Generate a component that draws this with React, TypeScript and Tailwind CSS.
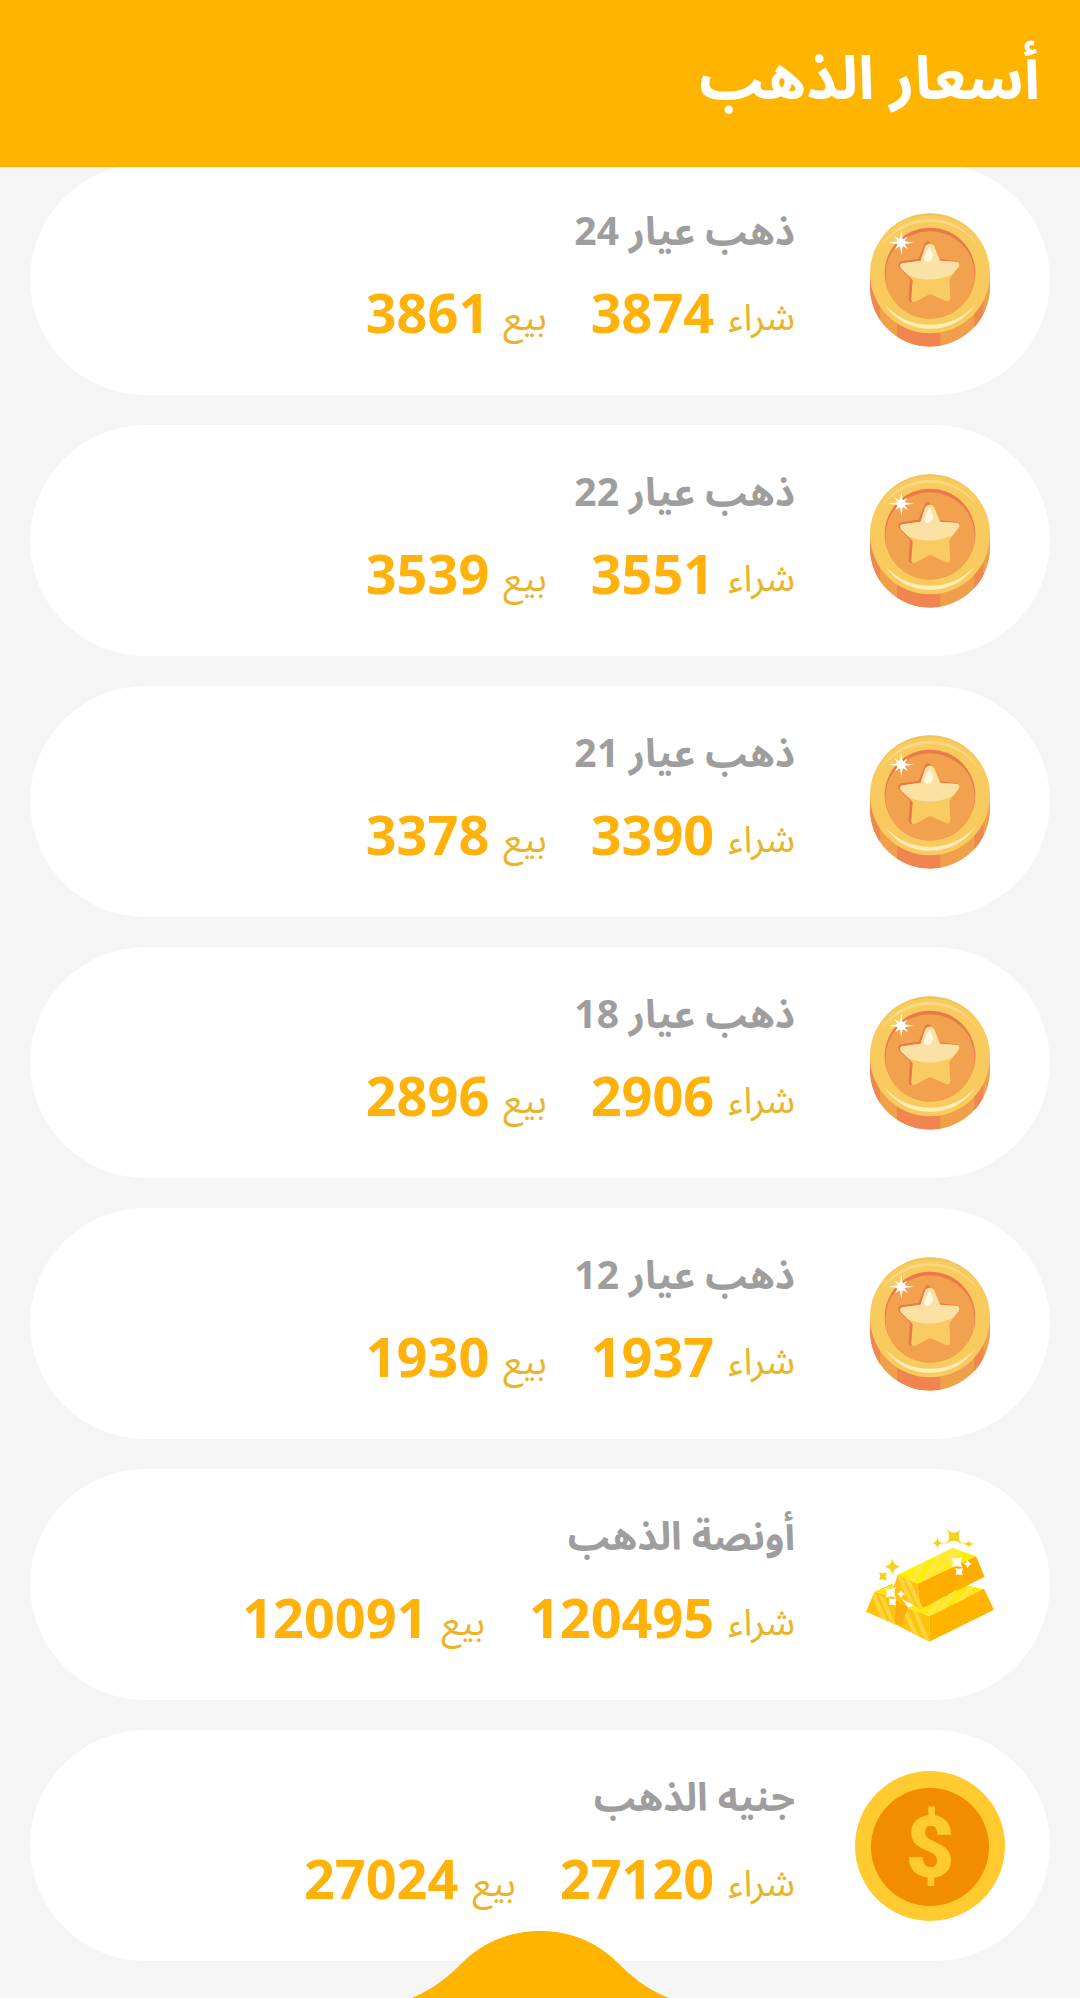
type IconName = 'coin' | 'bars' | 'pound';

interface GoldPrice {
  name: string;
  buy: number;
  sell: number;
  icon: IconName;
}

const prices: GoldPrice[] = [
  { name: 'ذهب عيار 24', buy: 3874, sell: 3861, icon: 'coin' },
  { name: 'ذهب عيار 22', buy: 3551, sell: 3539, icon: 'coin' },
  { name: 'ذهب عيار 21', buy: 3390, sell: 3378, icon: 'coin' },
  { name: 'ذهب عيار 18', buy: 2906, sell: 2896, icon: 'coin' },
  { name: 'ذهب عيار 12', buy: 1937, sell: 1930, icon: 'coin' },
  { name: 'أونصة الذهب', buy: 120495, sell: 120091, icon: 'bars' },
  { name: 'جنيه الذهب', buy: 27120, sell: 27024, icon: 'pound' },
];

function CoinIcon() {
  return (
    <svg viewBox="45 45 450 450" className="size-full" aria-hidden="true">
      <defs>
        <clipPath id="coin-side">
          <path d="M90 250 V290 A180 180 0 0 0 450 290 V250 Z" />
        </clipPath>
      </defs>
      {/* Edge */}
      <g clipPath="url(#coin-side)">
        <rect x="90" y="240" width="360" height="240" fill="#f0a04b" />
        <rect x="90" y="240" width="30" height="240" fill="#ee8850" />
        <rect x="171" y="240" width="130" height="240" fill="#f08550" />
        <rect x="403" y="240" width="27" height="240" fill="#ee8850" />
      </g>
      {/* Face */}
      <circle cx="270" cy="250" r="180" fill="#f9cb5e" />
      <path d="M128 140 A180 180 0 0 1 412 140 A190 190 0 0 0 128 140" fill="#efc45c" />
      <path d="M122 168 Q176 88 270 86 Q364 88 420 174 Q360 96 270 95 Q186 96 122 168" fill="#fbd983" />
      <circle cx="270" cy="249" r="136" fill="#ea7a4c" />
      <ellipse cx="270" cy="255" rx="134" ry="131" fill="#f2a14e" />
      <path d="M134 344 Q190 404 270 404 Q350 404 406 344 Q356 416 270 416 Q184 416 134 344" fill="#fdeeb8" />
      {/* Star */}
      <path d="M255 158 Q264 148 271 158 L290 206 L350 214 Q358 220 350 230 L322 264 L326 326 L265 310 L214 336 Q204 334 206 322 L210 266 L176 230 Q172 218 184 214 L236 206 Z" fill="#e87949" />
      <path d="M256 168 Q270 154 282 168 L300 212 L352 216 Q362 222 355 232 L328 268 L331 325 Q330 336 320 334 L270 312 L224 336 Q213 338 214 326 L218 270 L183 235 Q176 222 188 220 L242 212 Z" fill="#facb62" />
      <path d="M256 168 Q270 154 282 168 L300 212 L352 216 Q362 222 355 232 L338 252 Q270 284 204 255 L183 235 Q176 222 188 220 L242 212 Z" fill="#fbe2a4" />
      <path d="M269 168 L280 196 Q276 216 263 216 Q250 214 252 201 Z" fill="#fff6dc" />
      {/* Sparkle */}
      <path d="M184 120 L188 149 L203 139 L193 154 L222 158 L193 162 L205 178 L188 168 L184 196 L180 168 L165 178 L174 162 L145 158 L174 154 L163 139 L180 149 Z" fill="#fff" />
      <circle cx="183" cy="158" r="13" fill="#fff" />
    </svg>
  );
}

function BarsIcon() {
  return (
    <svg viewBox="45 28 450 450" className="size-full" aria-hidden="true">
      <defs>
        <clipPath id="bar-tops">
          <path d="M173 222 L338 142 L408 167 L232 249 Z M203 324 L240 328 L375 253 L432 266 L268 347 Z" />
        </clipPath>
        <clipPath id="bar-fronts">
          <path d="M103 274 L78 333 L168 374 L190 325 Z M173 222 L155 278 L242 325 L262 318 L232 249 Z M203 322 L182 376 L268 423 L268 347 Z" />
        </clipPath>
      </defs>
      {/* Left bar */}
      <path d="M103 274 L155 250 L205 322 L182 378 L78 333 Z" fill="#ffc20a" />
      <path d="M103 274 L155 252 L168 268 L155 290 Z" fill="#ffe60a" />
      {/* Right bar */}
      <path d="M203 322 L375 253 L432 266 L268 347 Z" fill="#ffe90a" />
      <path d="M203 322 L268 347 V423 L180 378 Z" fill="#ffc40d" />
      <path d="M268 347 L432 264 L462 327 L268 423 Z" fill="#ffb500" />
      {/* Top bar */}
      <path d="M173 222 L338 142 L408 167 L232 249 Z" fill="#fff000" />
      <path d="M408 167 L434 228 L242 325 L232 249 Z" fill="#ffae00" />
      <path d="M173 222 L232 249 L242 325 L155 278 Z" fill="#ffc210" />
      <path d="M168 300 L205 320 L184 374 L164 368 Z" fill="#ffad08" />
      <g clipPath="url(#bar-tops)" stroke="#ffe845" strokeWidth="14">
        <path d="M200 260 L262 170 M238 260 L320 140 M262 260 L344 140 M325 190 L365 145 M262 350 L320 270 M288 350 L346 262 M355 310 L400 245" />
      </g>
      <g clipPath="url(#bar-fronts)" stroke="#ffd640" strokeWidth="12">
        <path d="M98 275 L140 372 M118 275 L164 378 M178 226 L225 330 M196 225 L246 330 M192 324 L236 420 M220 320 L266 430" />
      </g>
      {/* Sparkles */}
      <g fill="#f7d21c">
        <path d="M320 86 Q342 106 361 87 Q350 106 363 128 Q342 112 321 128 Q334 106 320 86" />
        <path d="M292 108 Q293 126 310 128 Q293 129 292 146 Q291 129 276 128 Q291 126 292 108" />
        <path d="M386 119 Q387 129 403 130 Q387 132 386 142 Q385 132 368 130 Q385 129 386 119" />
        <path d="M157 173 Q160 195 181 198 Q160 201 157 223 Q154 201 134 198 Q154 195 157 173" />
        <path d="M117 214 Q130 222 142 214 Q134 227 141 240 Q129 233 117 239 Q124 227 117 214" />
        <path d="M305 127 H326 M358 127 H373" stroke="#f7d21c" strokeWidth="2" />
      </g>
      <g fill="#fff">
        <path d="M333 170 Q349 178 367 168 Q358 184 367 200 Q350 193 334 200 Q344 184 333 170" />
        <path d="M383 176 Q385 188 397 189 Q385 191 383 203 Q381 191 369 189 Q381 187 383 176" />
        <path d="M346 202 Q358 207 369 201 Q364 213 368 224 Q357 219 347 223 Q351 213 346 202" />
        <path d="M135 261 Q151 270 168 259 Q159 275 168 291 Q152 284 136 291 Q145 276 135 261" />
        <path d="M183 267 Q185 279 197 280 Q185 282 183 294 Q181 282 169 280 Q181 278 183 267" />
        <path d="M146 293 Q158 298 169 292 Q164 304 168 315 Q157 310 147 314 Q151 304 146 293" />
      </g>
    </svg>
  );
}

function PoundIcon() {
  return (
    <svg viewBox="45 62 450 450" className="size-full" aria-hidden="true">
      <circle cx="270" cy="287" r="225" fill="#ffcb30" />
      <circle cx="270" cy="290" r="177" fill="#f28c00" />
      <text x="270" y="381" textAnchor="middle" fontSize="254" fontWeight="900" fill="#ffcb30" className="font-['Roboto',sans-serif]">
        $
      </text>
    </svg>
  );
}

const icons = { coin: CoinIcon, bars: BarsIcon, pound: PoundIcon };

function Price({ label, value }: { label: string; value: number }) {
  return (
    <div className="flex items-center gap-[14px]">
      <dt className="pt-2 text-[37px] leading-none text-[#e9b42c]">{label}</dt>
      <dd className="text-[54px]/[84px] font-bold text-[#ffb20a]">{value}</dd>
    </div>
  );
}

function PriceCard({ item }: { item: GoldPrice }) {
  const Icon = icons[item.icon];

  return (
    <li className="flex h-[231px] items-center gap-[60px] rounded-full bg-white px-[45px]">
      <div className="size-[150px] shrink-0">
        <Icon />
      </div>
      <div className="pb-4">
        <h2 className="text-[39px]/[80px] font-bold text-[#9e9e9e]">{item.name}</h2>
        <dl className="flex gap-11">
          <Price label="شراء" value={item.buy} />
          <Price label="بيع" value={item.sell} />
        </dl>
      </div>
    </li>
  );
}

export default function App() {
  return (
    <div dir="rtl" className="relative min-h-screen bg-[#f5f5f5] font-['Noto_Sans','Noto_Sans_Arabic','DejaVu_Sans',sans-serif]">
      {/* Header */}
      <header className="relative z-10 flex h-[167px] items-center bg-[#ffb400] px-10 pb-4">
        <h1 className="text-[60px] font-bold text-white">أسعار الذهب</h1>
      </header>

      {/* Prices */}
      <main className="-mt-[3px] px-[30px] pb-9">
        <ul className="flex flex-col gap-[30px]">
          {prices.map((item) => (
            <PriceCard key={item.name} item={item} />
          ))}
        </ul>
      </main>

      {/* Bottom tab */}
      <div className="fixed inset-x-0 bottom-0 flex justify-center">
        <svg viewBox="0 0 257 67" className="h-[67px] w-[257px]" aria-hidden="true">
          <path d="M0 67 C24 57 40 42 50 32 C72 10 100 0 128 0 C157 0 184 10 206 32 C217 43 233 58 257 67 Z" fill="#ffb400" />
        </svg>
      </div>
    </div>
  );
}
